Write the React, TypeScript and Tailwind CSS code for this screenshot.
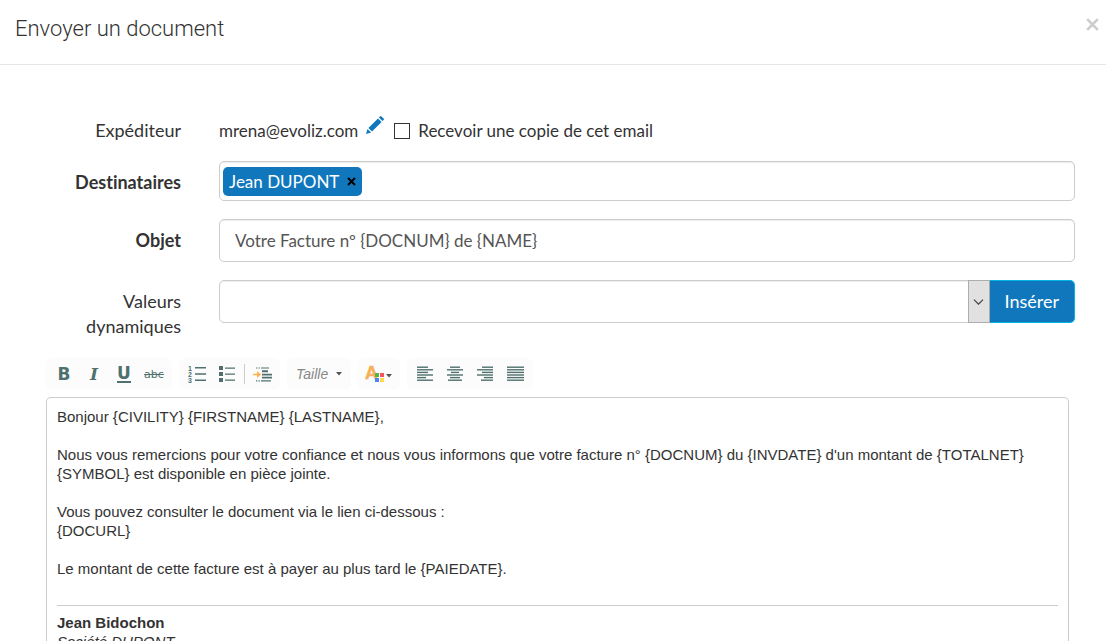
import { useState } from 'react';
import type { ReactNode } from 'react';

function ToolGroup({ children }: { children: ReactNode }) {
  return <div className="flex h-8 items-center rounded-md bg-[#fcfcfc] px-[3px]">{children}</div>;
}

function Tool({ label, children }: { label: string; children: ReactNode }) {
  return (
    <button type="button" aria-label={label} className="flex h-8 w-[30px] items-center justify-center text-[#4f706e]">
      {children}
    </button>
  );
}

// Each entry is [x, width] of one text line in a 17px wide icon
const ALIGNMENTS = [
  { label: 'Aligner à gauche', lines: [[0, 11], [0, 16], [0, 11], [0, 16], [0, 9], [0, 16]] },
  { label: 'Centrer', lines: [[3, 10], [0, 16], [4, 8], [0, 16], [3, 10], [1, 14]] },
  { label: 'Aligner à droite', lines: [[5, 11], [0, 16], [5, 11], [0, 16], [7, 9], [4, 12]] },
  { label: 'Justifier', lines: [[0, 17], [0, 17], [0, 17], [0, 17], [0, 17], [0, 17]] },
];

function AlignIcon({ lines }: { lines: number[][] }) {
  return (
    <svg width="17" height="16" viewBox="0 0 17 16" fill="#4f706e">
      {lines.map(([x, w], i) => (
        <rect key={i} x={x} y={i * 2.6 + 0.5} width={w} height="1.4" />
      ))}
    </svg>
  );
}

export default function App() {
  const [copy, setCopy] = useState(false);
  const [subject, setSubject] = useState('Votre Facture nº {DOCNUM} de {NAME}');
  const [recipients, setRecipients] = useState(['Jean DUPONT']);

  return (
    <div className="flex h-screen flex-col overflow-hidden bg-white font-['Lato',sans-serif] text-lg leading-[25px] text-[#333] [font-variant-ligatures:none]">
      {/* Header */}
      <header className="flex shrink-0 items-start justify-between border-b border-[#e5e5e5] pt-[13px] pr-1.5 pb-[19px] pl-[15px]">
        <h1 className="font-['Roboto',sans-serif] text-[22px] leading-8 font-light">Envoyer un document</h1>
        <button type="button" aria-label="Fermer" className="mt-1 p-px">
          <svg width="13" height="13" viewBox="0 0 13 13" stroke="#ccc" strokeWidth="2.6">
            <path d="M1.2 1.2 11.8 11.8M11.8 1.2 1.2 11.8" />
          </svg>
        </button>
      </header>

      {/* Form */}
      <form className="grid shrink-0 grid-cols-[135px_1fr] gap-x-[38px] gap-y-[18px] pt-[53px] pr-[31px] pl-[46px]">
        <span className="text-right">Expéditeur</span>
        <div className="flex h-[25px] items-center text-[17px]">
          <span>mrena@evoliz.com</span>
          <button type="button" aria-label="Modifier l'expéditeur" className="ml-2 -mt-3">
            <svg width="18" height="18" viewBox="0 0 18 18" fill="#1177bd">
              <path d="M0 18 1.5 12.9 5.1 16.5ZM2.4 12 12 2.4 15.6 6 6 15.6ZM12.9 1.5 14 .4Q14.7-.2 15.4.4L17.6 2.6Q18.3 3.3 17.6 4L16.5 5.1Z" />
            </svg>
          </button>
          <input
            id="copy"
            type="checkbox"
            checked={copy}
            onChange={(e) => setCopy(e.target.checked)}
            className="ml-2.5 size-4 appearance-none border border-[#333] bg-white checked:bg-[#1177bd]"
          />
          <label htmlFor="copy" className="ml-2">Recevoir une copie de cet email</label>
        </div>

        <label htmlFor="recipients" className="pt-[9px] text-right font-bold">Destinataires</label>
        <div className="flex h-10 items-center rounded-[5px] border border-[#ccc] px-[3px] shadow-[inset_0_1px_1px_rgba(0,0,0,0.075)]">
          {recipients.map((name) => (
            <span key={name} className="flex h-[29px] items-center rounded-[5px] bg-[#1177bd] px-1.5 text-[17px] text-white">
              {name}
              <button
                type="button"
                aria-label={`Retirer ${name}`}
                className="ml-2"
                onClick={() => setRecipients(recipients.filter((r) => r !== name))}
              >
                <svg width="9" height="9" viewBox="0 0 9 9" stroke="#000" strokeWidth="2">
                  <path d="M1 1 8 8M8 1 1 8" />
                </svg>
              </button>
            </span>
          ))}
          <input id="recipients" type="text" className="ml-2 min-w-0 flex-1 outline-none" />
        </div>

        <label htmlFor="subject" className="pt-[9px] text-right font-bold">Objet</label>
        <input
          id="subject"
          type="text"
          value={subject}
          onChange={(e) => setSubject(e.target.value)}
          className="h-[43px] w-full rounded-[5px] border border-[#ccc] px-[15px] text-[17px] text-[#555] shadow-[inset_0_1px_1px_rgba(0,0,0,0.075)] outline-none"
        />

        <label htmlFor="values" className="pt-[9px] text-right">Valeurs dynamiques</label>
        <div className="flex items-start">
          <div className="relative flex-1">
            <select
              id="values"
              defaultValue=""
              className="block h-[43px] w-full appearance-none rounded-l-[5px] border border-[#ccc] bg-white px-[15px] shadow-[inset_0_1px_1px_rgba(0,0,0,0.075)] outline-none"
            >
              <option value=""></option>
            </select>
            <span className="pointer-events-none absolute inset-y-0 right-0 flex w-[22px] items-center justify-center border border-[#adadad] bg-[#e1e1e1]">
              <svg width="11" height="6" viewBox="0 0 11 6" fill="none" stroke="#444" strokeWidth="1.2">
                <path d="M1 .7 5.5 5.2 10 .7" />
              </svg>
            </span>
          </div>
          <button type="button" className="h-[43px] rounded-r-[5px] border border-l-0 border-[#00b5e2] bg-[#1177bd] px-[15px] text-white">
            Insérer
          </button>
        </div>
      </form>

      {/* Toolbar */}
      <div className="mt-[19px] flex shrink-0 gap-[7px] pl-[46px] font-['Liberation_Sans',sans-serif]">
        <ToolGroup>
          <Tool label="Gras"><span className="font-['DejaVu_Sans',sans-serif] text-[17px] font-bold">B</span></Tool>
          <Tool label="Italique"><span className="font-['DejaVu_Serif',serif] text-[17px] font-bold italic">I</span></Tool>
          <Tool label="Souligné">
            <span className="border-b-2 border-current font-['DejaVu_Sans',sans-serif] text-[17px] leading-4 font-bold">U</span>
          </Tool>
          <Tool label="Barré"><span className="font-['DejaVu_Sans',sans-serif] text-[11px] line-through">abc</span></Tool>
        </ToolGroup>

        <ToolGroup>
          <Tool label="Liste numérotée">
            <svg width="18" height="20" viewBox="0 0 18 20" fill="#4f706e">
              <text x="0" y="7" fontSize="7" fontWeight="bold">1</text>
              <text x="0" y="13" fontSize="7" fontWeight="bold">2</text>
              <text x="0" y="19" fontSize="7" fontWeight="bold">3</text>
              <path d="M7 3h11v1.4H7zM7 9.3h11v1.4H7zM7 15.6h11v1.4H7z" />
            </svg>
          </Tool>
          <Tool label="Liste à puces">
            <svg width="16" height="16" viewBox="0 0 16 16" fill="#4f706e">
              <path d="M0 0h4v4H0zM0 6h4v4H0zM0 12h4v4H0zM6 1.4h10v1.4H6zM6 7.4h10v1.4H6zM6 13.4h10v1.4H6z" />
            </svg>
          </Tool>
          <span className="mx-0.5 h-5 w-px bg-[#ccc]" />
          <Tool label="Augmenter le retrait">
            <svg width="19" height="15" viewBox="0 0 19 15">
              <path d="M0 6.7h4V3.9l4 3.6-4 3.6V8.3H0z" fill="#ffb14e" />
              <path
                d="M8 .4h8v1.2H8zM9 3.2h6v2.1H9zM9 6.8h10v1.6H9zM9 9.8h10v1.8H9zM8 13.3h10v1.2H8zM3 .4h1.3v1.2H3zM5.5.4h1.3v1.2H5.5zM3 13.3h1.3v1.2H3zM5.5 13.3h1.3v1.2H5.5z"
                fill="#4f706e"
              />
            </svg>
          </Tool>
        </ToolGroup>

        <ToolGroup>
          <button type="button" className="flex h-8 items-center gap-2 px-1.5 text-sm text-[#888] italic">
            Taille
            <svg width="6" height="4" viewBox="0 0 6 4" fill="#555"><path d="M0 0h6L3 3.6z" /></svg>
          </button>
        </ToolGroup>

        <ToolGroup>
          <button type="button" aria-label="Couleur du texte" className="flex h-8 w-9 items-center justify-center">
            <svg width="28" height="24" viewBox="0 0 28 24">
              <text x="0" y="17" fontSize="18" fontWeight="bold" fill="#f7b05b" stroke="#f7b05b" strokeWidth=".6">A</text>
              <rect x="10" y="11" width="4" height="4" fill="#56b146" />
              <rect x="15" y="11" width="4" height="4" fill="#f4545c" />
              <rect x="10" y="16" width="4" height="4" fill="#4a86f7" />
              <rect x="15" y="16" width="4" height="4" fill="#ffd84d" />
              <path d="M21 12h6l-3 3.4z" fill="#555" />
            </svg>
          </button>
        </ToolGroup>

        <ToolGroup>
          {ALIGNMENTS.map((a) => (
            <Tool key={a.label} label={a.label}><AlignIcon lines={a.lines} /></Tool>
          ))}
        </ToolGroup>
      </div>

      {/* Message */}
      <div
        role="textbox"
        aria-multiline="true"
        aria-label="Message"
        contentEditable
        suppressContentEditableWarning
        className="mt-[7px] mr-[37px] ml-[46px] min-h-0 flex-1 overflow-hidden rounded-t-[5px] border border-b-0 border-[#ccc] px-2.5 pt-[9px] font-['Liberation_Sans',sans-serif] text-[15px] leading-[19px] outline-none"
      >
        <p>{'Bonjour {CIVILITY} {FIRSTNAME} {LASTNAME},'}</p>
        <p className="mt-[19px]">
          {"Nous vous remercions pour votre confiance et nous vous informons que votre facture n° {DOCNUM} du {INVDATE} d'un montant de {TOTALNET} {SYMBOL} est disponible en pièce jointe."}
        </p>
        <p className="mt-[19px]">
          Vous pouvez consulter le document via le lien ci-dessous :<br />
          {'{DOCURL}'}
        </p>
        <p className="mt-[19px]">{'Le montant de cette facture est à payer au plus tard le {PAIEDATE}.'}</p>
        <hr className="mt-[27px] mb-[7px] border-[#ccc]" />
        <p className="font-bold">Jean Bidochon</p>
        <p className="italic">Société DUPONT</p>
      </div>
    </div>
  );
}
